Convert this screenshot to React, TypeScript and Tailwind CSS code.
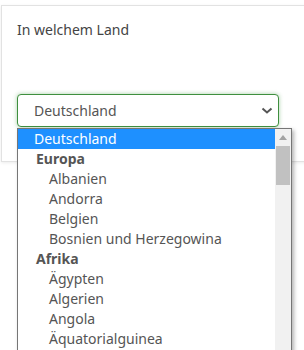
import React from "react";

const font = { fontFamily: '"Noto Sans", "Open Sans", sans-serif' };

type Item = { label: string; kind: "selected" | "group" | "option" };

const items: Item[] = [
  { label: "Deutschland", kind: "selected" },
  { label: "Europa", kind: "group" },
  { label: "Albanien", kind: "option" },
  { label: "Andorra", kind: "option" },
  { label: "Belgien", kind: "option" },
  { label: "Bosnien und Herzegowina", kind: "option" },
  { label: "Afrika", kind: "group" },
  { label: "Ägypten", kind: "option" },
  { label: "Algerien", kind: "option" },
  { label: "Angola", kind: "option" },
  { label: "Äquatorialguinea", kind: "option" },
];

export default function App() {
  return (
    <div
      className="relative h-[350px] w-[304px] overflow-hidden bg-white"
      style={font}
    >
      <div className="ml-[1px] mt-[5px] h-[157px] w-[330px] border border-[#e2e2e2] bg-white px-[15px] pt-[14px] shadow-[0_1px_3px_rgba(0,0,0,0.08)]">
        <div className="text-[14px] leading-[20px] text-[#444]">
          In welchem Land
        </div>
        <div className="mt-[54px] flex h-[33px] w-[262px] items-center justify-between rounded-[4px] border border-[#3f8f3f] bg-white pl-[16px] pr-[5px] shadow-[0_0_4px_rgba(60,150,60,0.45)]">
          <span className="text-[14px] leading-[20px] text-[#555]">
            Deutschland
          </span>
          <svg width="12" height="8" viewBox="0 0 12 8" className="mt-[1px]">
            <path
              d="M1.5 1.5 L6 5.5 L10.5 1.5"
              fill="none"
              stroke="#555"
              strokeWidth="2"
            />
          </svg>
        </div>
      </div>

      <div className="absolute left-[17px] top-[128px] flex h-[240px] w-[275px] border border-[#767676] bg-white shadow-[2px_2px_4px_rgba(0,0,0,0.3)]">
        <div className="flex-1">
          {items.map((it) => (
            <div
              key={it.label}
              className={
                it.kind === "selected"
                  ? "h-[20px] bg-[#1e90ff] pl-[16px] text-[14px] leading-[20px] text-white"
                  : it.kind === "group"
                  ? "h-[20px] pl-[18px] text-[14px] font-bold leading-[20px] text-[#555]"
                  : "h-[20px] pl-[31px] text-[14px] leading-[20px] text-[#555]"
              }
            >
              {it.label}
            </div>
          ))}
        </div>
        <div className="flex w-[16px] flex-col items-center bg-[#f1f1f1]">
          <div className="flex h-[17px] w-full items-center justify-center">
            <svg width="8" height="5" viewBox="0 0 8 5">
              <path d="M0 5 L4 0 L8 5 Z" fill="#a3a3a3" />
            </svg>
          </div>
          <div className="h-[39px] w-[14px] bg-[#c1c1c1]" />
        </div>
      </div>
    </div>
  );
}
